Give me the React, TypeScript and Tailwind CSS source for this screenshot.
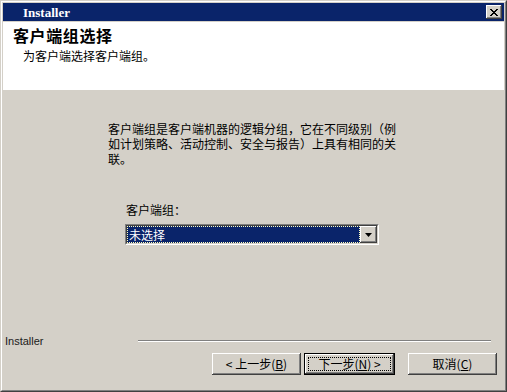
const cjk = { fontFamily: '"Noto Sans CJK SC", "Liberation Sans", sans-serif' };

const raised =
  "bg-[#d4d0c8] shadow-[inset_-1px_-1px_#404040,inset_1px_1px_#ffffff,inset_-2px_-2px_#808080]";

function WizButton({ children, isDefault }: { children: React.ReactNode; isDefault?: boolean }) {
  if (isDefault) {
    return (
      <div className="h-[22px] w-[91px] border border-black">
        <div className={`${raised} flex h-full w-full items-center justify-center p-[3px]`}>
          <div className="flex h-full w-full items-center justify-center border border-dotted border-black text-[12px] leading-none text-black">
            {children}
          </div>
        </div>
      </div>
    );
  }
  return (
    <div className={`${raised} flex h-[22px] w-[89px] items-center justify-center text-[12px] leading-none text-black`}>
      {children}
    </div>
  );
}

export default function App() {
  return (
    <div className="h-[392px] w-[507px] border-t border-l border-r border-b border-t-[#d4d0c8] border-l-[#d4d0c8] border-r-[#404040] border-b-[#404040]" style={cjk}>
      <div className="flex h-full w-full flex-col border border-t-white border-l-white border-r-[#808080] border-b-[#808080] bg-[#d4d0c8] p-px">
        {/* Title bar */}
        <div className="flex h-[18px] shrink-0 items-center justify-between bg-[#0a246a] pl-[20px] pr-[2px]">
          <span className="text-[13px] font-bold leading-none text-white" style={{ fontFamily: '"Liberation Serif", serif' }}>
            Installer
          </span>
          <div className={`${raised} flex h-[14px] w-[16px] items-center justify-center`}>
            <svg width="8" height="7" viewBox="0 0 8 7">
              <path d="M0 0h2v1h1v1h2V1h1V0h2v1H7v1H6v1H5v1h1v1h1v1h1v1H6V6H5V5H3v1H2v1H0V6h1V5h1V4h1V3H2V2H1V1H0z" fill="#000" />
            </svg>
          </div>
        </div>

        {/* Header */}
        <div className="mt-px flex h-[68px] shrink-0 flex-col bg-white pl-[10px] pt-[4px]">
          <div className="text-[16px] font-bold leading-[18px] tracking-[0.6px] text-black">客户端组选择</div>
          <div className="mt-[5px] pl-[10px] text-[12px] leading-[13px] text-black">为客户端选择客户端组。</div>
        </div>

        {/* Body */}
        <div className="flex flex-1 flex-col">
          <div className="pl-[105px] pt-[31px]">
            <p className="w-[292px] text-[12px] leading-[15px] text-black">
              客户端组是客户端机器的逻辑分组，它在不同级别（例如计划策略、活动控制、安全与报告）上具有相同的关联。
            </p>
            <div className="mt-[37px] pl-[18px] text-[12px] leading-[14px] text-black">客户端组：</div>
            <div className="ml-[17px] mt-[7px] h-[21px] w-[254px] border border-t-[#808080] border-l-[#808080] border-r-white border-b-white">
              <div className="flex h-full w-full border border-t-[#404040] border-l-[#404040] border-r-[#d4d0c8] border-b-[#d4d0c8] bg-white">
                <div className="flex flex-1 items-center border border-dotted border-[#ffffc0] bg-[#0a246a] pl-[1px] text-[12px] leading-none text-white">
                  未选择
                </div>
                <div className={`${raised} flex w-[17px] items-center justify-center`}>
                  <svg width="7" height="4" viewBox="0 0 7 4">
                    <path d="M0 0h7L3.5 4z" fill="#000" />
                  </svg>
                </div>
              </div>
            </div>
          </div>

          {/* Footer */}
          <div className="mt-auto pb-[14px]">
            <div className="flex h-[12px] items-center pl-[2px] pr-[13px]">
              <span className="w-[133px] text-[11px] leading-none text-[#202020]" style={{ fontFamily: '"Liberation Sans", sans-serif' }}>
                Installer
              </span>
              <div className="h-[2px] flex-1 border-t border-t-[#808080] border-b border-b-white" />
            </div>
            <div className="mt-[6px] flex justify-end pr-[7px]">
              <WizButton>
                &lt; 上一步(<span className="underline">B</span>)
              </WizButton>
              <div className="ml-[3px]">
                <WizButton isDefault>
                  下一步(<span className="underline">N</span>) &gt;
                </WizButton>
              </div>
              <div className="ml-[13px]">
                <WizButton>
                  取消(<span className="underline">C</span>)
                </WizButton>
              </div>
            </div>
          </div>
        </div>
      </div>
    </div>
  );
}
